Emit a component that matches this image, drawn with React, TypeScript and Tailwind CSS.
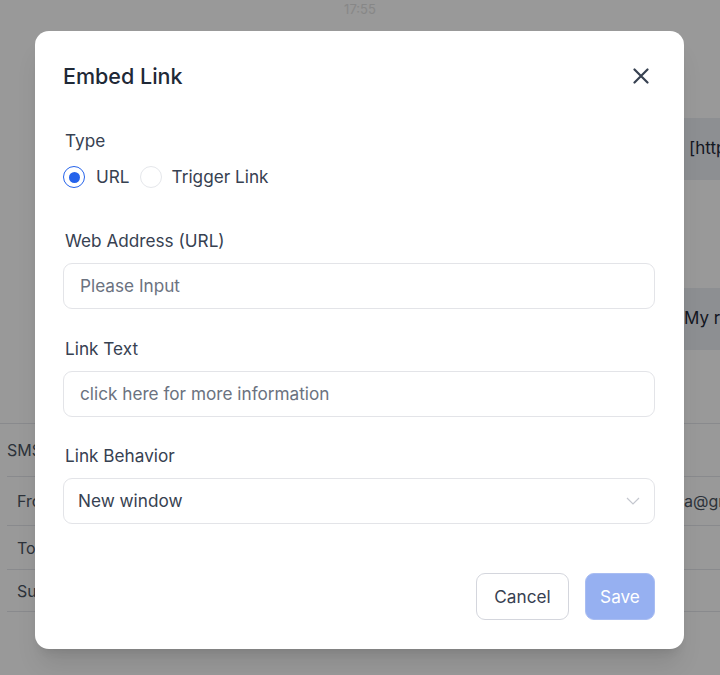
export default function App() {
  return (
    <div className="relative h-[675px] w-[720px] overflow-hidden bg-white font-['Inter','Noto_Sans',sans-serif]">
      {/* page behind the dialog */}
      <div className="flex flex-col">
        <div className="h-[18px] pt-[2px] text-center text-[13px] leading-[14px] text-[#e2e2e2]">17:55</div>
        <div className="mt-[100px] ml-[640px] flex h-[62px] items-center overflow-hidden whitespace-nowrap bg-[#eceef3] pl-[49px] text-[17px] text-[#1f2937]">
          [https://example.com]
        </div>
        <div className="mt-[108px] ml-[640px] flex h-[62px] items-center overflow-hidden whitespace-nowrap bg-[#eceef3] pl-[44px] text-[17px] text-[#1f2937]">
          My reply to the message
        </div>
        <div className="mt-[73px] border-t border-[#e5e7eb]">
          <div className="flex h-[52px] items-center pl-[7px] text-[16px] text-[#4b5563]">SMS</div>
          <div className="ml-[7px] border-t border-[#e5e7eb]">
            <div className="flex h-[48px] items-center overflow-hidden text-[16px] text-[#4b5563]">
              <span className="w-[677px] shrink-0 pl-[10px]">From</span>
              <span className="whitespace-nowrap">a@gmail.com</span>
            </div>
          </div>
          <div className="ml-[7px] border-t border-[#e5e7eb]">
            <div className="flex h-[43px] items-center pl-[10px] text-[16px] text-[#4b5563]">To</div>
          </div>
          <div className="ml-[7px] border-t border-[#e5e7eb]">
            <div className="flex h-[41px] items-center pl-[10px] text-[16px] text-[#4b5563]">Subject</div>
          </div>
          <div className="ml-[7px] border-t border-[#e5e7eb]" />
        </div>
      </div>

      {/* overlay */}
      <div className="absolute inset-0 bg-black/40" />

      {/* dialog */}
      <div className="absolute left-[35px] top-[31px] flex h-[618px] w-[649px] flex-col rounded-[14px] bg-white pl-[28px] pr-[29px] pt-[31px] shadow-xl">
        <div className="flex items-center justify-between">
          <h2 className="text-[21.5px] font-medium leading-[28px] text-[#1f2937]">Embed Link</h2>
          <button className="mr-[6px] flex h-[16px] w-[16px] items-center justify-center">
            <svg width="16" height="16" viewBox="0 0 16 16" fill="none" stroke="#374151" strokeWidth="2.2" strokeLinecap="round">
              <path d="M1.5 1.5 14.5 14.5M14.5 1.5 1.5 14.5" />
            </svg>
          </button>
        </div>

        <label className="mt-[39px] pl-[2px] text-[17.2px] leading-[24px] text-[#374151]">Type</label>
        <div className="mt-[12px] flex h-[24px] items-center text-[17.2px] text-[#374151]">
          <span className="flex h-[22px] w-[22px] items-center justify-center rounded-full border-[1.5px] border-[#2563eb]">
            <span className="h-[11px] w-[11px] rounded-full bg-[#2563eb]" />
          </span>
          <span className="ml-[11px]">URL</span>
          <span className="ml-[10px] h-[22px] w-[22px] rounded-full border-[1.5px] border-[#e5e7eb]" />
          <span className="ml-[10px]">Trigger Link</span>
        </div>

        <label className="mt-[40px] pl-[2px] text-[17.2px] leading-[24px] text-[#374151]">Web Address (URL)</label>
        <div className="mt-[10px] flex h-[46px] items-center rounded-[9px] border border-[#e3e4e8] pl-[16px] text-[17.2px] text-[#6b7280]">
          Please Input
        </div>

        <label className="mt-[28px] pl-[2px] text-[17.2px] leading-[24px] text-[#374151]">Link Text</label>
        <div className="mt-[10px] flex h-[46px] items-center rounded-[9px] border border-[#e3e4e8] pl-[16px] text-[17.2px] text-[#6b7280]">
          click here for more information
        </div>

        <label className="mt-[27px] pl-[2px] text-[17.2px] leading-[24px] text-[#374151]">Link Behavior</label>
        <div className="mt-[10px] flex h-[46px] items-center justify-between rounded-[9px] border border-[#e3e4e8] pl-[14px] pr-[14px] text-[17.2px] text-[#374151]">
          <span>New window</span>
          <svg width="14" height="8" viewBox="0 0 14 8" fill="none" stroke="#c4c7cf" strokeWidth="1.2">
            <path d="M1 1 7 7 13 1" />
          </svg>
        </div>

        <div className="mt-[49px] flex justify-end gap-[16px]">
          <button className="h-[47px] w-[93px] rounded-[9px] border border-[#d4d6dd] text-[17.2px] text-[#374151]">Cancel</button>
          <button className="h-[47px] w-[70px] rounded-[9px] border border-[#a9bdf2] bg-[#96b0f1] text-[17.2px] text-white">Save</button>
        </div>
      </div>
    </div>
  )
}
